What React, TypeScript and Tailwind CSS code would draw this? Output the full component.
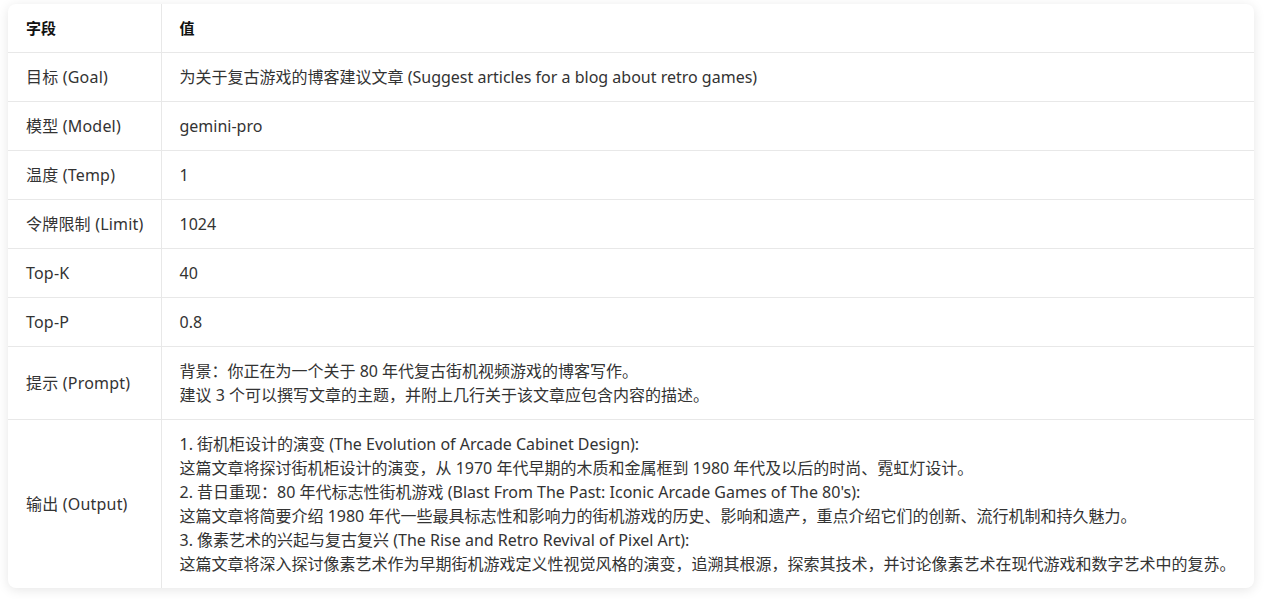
const rows: { k: string; v: string[] }[] = [
  { k: "目标 (Goal)", v: ["为关于复古游戏的博客建议文章 (Suggest articles for a blog about retro games)"] },
  { k: "模型 (Model)", v: ["gemini-pro"] },
  { k: "温度 (Temp)", v: ["1"] },
  { k: "令牌限制 (Limit)", v: ["1024"] },
  { k: "Top-K", v: ["40"] },
  { k: "Top-P", v: ["0.8"] },
  {
    k: "提示 (Prompt)",
    v: [
      "背景：你正在为一个关于 80 年代复古街机视频游戏的博客写作。",
      "建议 3 个可以撰写文章的主题，并附上几行关于该文章应包含内容的描述。",
    ],
  },
  {
    k: "输出 (Output)",
    v: [
      "1. 街机柜设计的演变 (The Evolution of Arcade Cabinet Design):",
      "这篇文章将探讨街机柜设计的演变，从 1970 年代早期的木质和金属框到 1980 年代及以后的时尚、霓虹灯设计。",
      "2. 昔日重现：80 年代标志性街机游戏 (Blast From The Past: Iconic Arcade Games of The 80's):",
      "这篇文章将简要介绍 1980 年代一些最具标志性和影响力的街机游戏的历史、影响和遗产，重点介绍它们的创新、流行机制和持久魅力。",
      "3. 像素艺术的兴起与复古复兴 (The Rise and Retro Revival of Pixel Art):",
      "这篇文章将深入探讨像素艺术作为早期街机游戏定义性视觉风格的演变，追溯其根源，探索其技术，并讨论像素艺术在现代游戏和数字艺术中的复苏。",
    ],
  },
];

export default function App() {
  return (
    <div
      className="min-h-[599px] bg-white px-2 pt-1 pb-3"
      style={{ fontFamily: '"Noto Sans", "Noto Sans CJK SC", sans-serif' }}
    >
      <div className="w-[1246px] overflow-hidden rounded-lg bg-white shadow-[0_2px_12px_rgba(0,0,0,0.10)]">
        <table className="w-full table-fixed border-collapse text-[16px] leading-6">
          <colgroup>
            <col className="w-[153px]" />
            <col />
          </colgroup>
          <thead>
            <tr className="border-b border-[#e8e8e8]">
              <th className="border-r border-[#e8e8e8] px-[18px] py-3 text-left font-bold text-[15px] text-[#111]">
                字段
              </th>
              <th className="px-[18px] py-3 text-left font-bold text-[15px] text-[#111]">值</th>
            </tr>
          </thead>
          <tbody>
            {rows.map((r, i) => (
              <tr key={r.k} className={i < rows.length - 1 ? "border-b border-[#e8e8e8]" : ""}>
                <td className="border-r border-[#e8e8e8] px-[18px] py-3 align-middle whitespace-nowrap tracking-[0.2px] text-[#333]">
                  {r.k}
                </td>
                <td className="px-[18px] py-3 whitespace-nowrap text-[#333]">
                  {r.v.map((line) => (
                    <div key={line}>{line}</div>
                  ))}
                </td>
              </tr>
            ))}
          </tbody>
        </table>
      </div>
    </div>
  );
}
